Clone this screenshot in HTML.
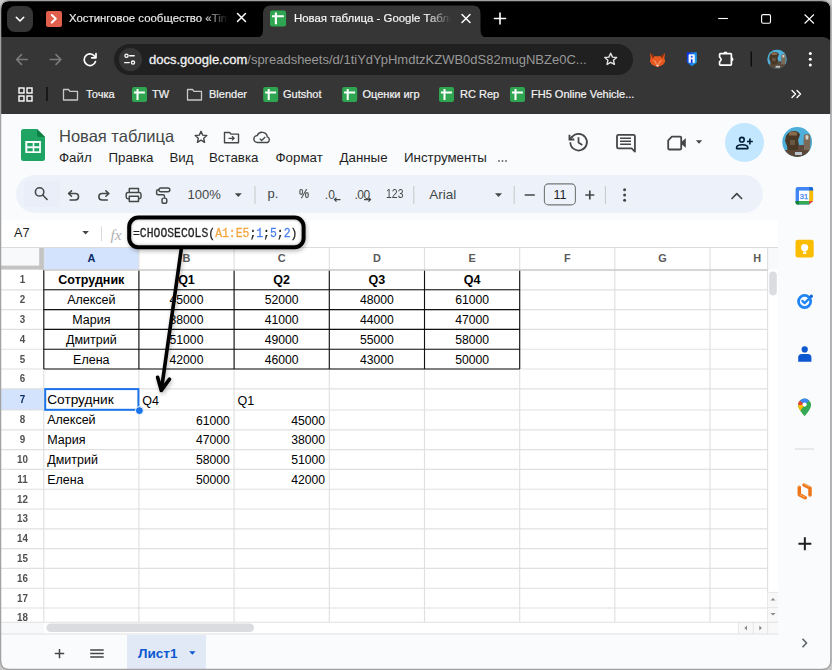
<!DOCTYPE html>
<html><head><meta charset="utf-8">
<style>
*{margin:0;padding:0;box-sizing:border-box}
html,body{width:832px;height:670px;overflow:hidden;background:#d6d6d6;font-family:"Liberation Sans",sans-serif}
.a{position:absolute}
#win{position:absolute;left:0;top:0;width:832px;height:670px;overflow:hidden;background:#000}
.t{position:absolute;white-space:nowrap;line-height:1}
svg{position:absolute;overflow:visible}
</style></head><body>
<div id="win">
<!-- TAB STRIP -->
<div class="a" style="left:7px;top:6px;width:26px;height:26px;border-radius:8px;background:#363636"></div>
<svg style="left:0;top:0" width="832" height="40">
  <path d="M16.3 17.3l3.7 3.7 3.7-3.7" fill="none" stroke="#fff" stroke-width="1.6" stroke-linecap="round" stroke-linejoin="round"/>
</svg>
<!-- tab1 -->
<div class="a" style="left:46px;top:11px;width:15.6px;height:15.6px;border-radius:2px;background:#e0604d"></div>
<svg style="left:0;top:0" width="832" height="40">
  <path d="M51.8 15l4 3.8-4 3.8" fill="none" stroke="#fff" stroke-width="2" stroke-linecap="round" stroke-linejoin="round"/>
</svg>
<div class="t" style="left:69px;top:13.3px;font-size:11.4px;color:#eeeeee;-webkit-text-stroke:0.15px #eeeeee;width:159px;overflow:hidden;-webkit-mask-image:linear-gradient(90deg,#000 85%,transparent)">Хостинговое сообщество «Timeweb»</div>
<svg style="left:0;top:0" width="832" height="40">
  <path d="M237.5 13.5l8 8M245.5 13.5l-8 8" stroke="#fff" stroke-width="1.5" stroke-linecap="round"/>
</svg>
<!-- active tab -->
<svg style="left:0;top:0" width="832" height="40">
  <path d="M255 38 Q263 38 263 30 L263 13.4 Q263 5.4 271 5.4 L472.5 5.4 Q480.5 5.4 480.5 13.4 L480.5 30 Q480.5 38 488.5 38 Z" fill="#363636"/>
</svg>
<div class="t" style="left:294px;top:13.3px;font-size:11.4px;color:#f6f6f6;-webkit-text-stroke:0.2px #f6f6f6;width:157px;overflow:hidden;-webkit-mask-image:linear-gradient(90deg,#000 85%,transparent)">Новая таблица - Google Таблицы</div>
<svg style="left:0;top:0" width="832" height="40">
  <path d="M462 14.5l8 8M470 14.5l-8 8" stroke="#fff" stroke-width="1.5" stroke-linecap="round"/>
  <path d="M500 13v11M494.5 18.5h11" stroke="#fff" stroke-width="1.6" stroke-linecap="round"/>
  <path d="M718.2 18.5h9.7" stroke="#fff" stroke-width="1.1"/>
  <rect x="761.6" y="14.6" width="8.9" height="8.6" rx="1.5" fill="none" stroke="#fff" stroke-width="1.1"/>
  <path d="M804.6 14.5l9.3 9M813.9 14.5l-9.3 9" stroke="#fff" stroke-width="1.1"/>
</svg>

<!-- TOOLBAR + BOOKMARKS -->
<div class="a" style="left:0;top:37px;width:832px;height:77px;background:#363636;border-radius:0 9px 0 0"></div>
<svg style="left:0;top:0" width="832" height="120">
  <!-- back -->
  <path d="M27.3 59.5H16.6M21.5 54.6l-4.9 4.9 4.9 4.9" fill="none" stroke="#7b7b7b" stroke-width="1.6" stroke-linecap="round" stroke-linejoin="round"/>
  <path d="M50.2 59.5H60.9M56 54.6l4.9 4.9-4.9 4.9" fill="none" stroke="#7b7b7b" stroke-width="1.6" stroke-linecap="round" stroke-linejoin="round"/>
  <path d="M95.2 57.2A5.8 5.8 0 1 0 95.5 61.5" fill="none" stroke="#fff" stroke-width="1.7" stroke-linecap="round"/>
  <path d="M96 53.5v4.3h-4.3" fill="none" stroke="#fff" stroke-width="1.7" stroke-linecap="round" stroke-linejoin="round"/>
</svg>
<div class="a" style="left:114px;top:43.5px;width:519px;height:31.5px;border-radius:16px;background:#202020"></div>
<div class="a" style="left:118.5px;top:47.5px;width:23px;height:23px;border-radius:50%;background:#363636"></div>
<svg style="left:0;top:0" width="832" height="120">
  <circle cx="126.5" cy="55.8" r="1.6" fill="none" stroke="#fff" stroke-width="1.3"/>
  <path d="M129.6 55.8h4.6M124.6 62.6h4.6" stroke="#fff" stroke-width="1.4" stroke-linecap="round"/>
  <circle cx="133" cy="62.6" r="1.6" fill="none" stroke="#fff" stroke-width="1.3"/>
  <path d="M610.7 53.2l1.8 3.9 4.1.4-3.1 2.8.9 4.1-3.7-2.1-3.7 2.1.9-4.1-3.1-2.8 4.1-.4z" fill="none" stroke="#e3e3e3" stroke-width="1.4" stroke-linejoin="round"/>
</svg>
<div class="t" style="left:149px;top:53px;font-size:13px;color:#f2f2f2"><span style="-webkit-text-stroke:0.3px #f2f2f2">docs.google.com</span><span style="color:#989898">/spreadsheets/d/1tiYdYpHmdtzKZWB0dS82mugNBZe0C...</span></div>
<!-- extensions -->
<svg style="left:0;top:0" width="832" height="120">
  <path d="M650 53l4.2 3.3h6.6L665 53l-0.6 5.2 0.8 3.2-2.2 3.4-2.8 1.3-2.7 1.2-2.7-1.2-2.8-1.3-2.2-3.4 0.8-3.2z" fill="#e9581f"/>
  <path d="M650 53l4.2 3.3-1.2 2.5zM665 53l-4.2 3.3 1.2 2.5z" fill="#8a2b0c"/>
  <path d="M653.5 60.5l2 1.2 0.8 2.5M661.5 60.5l-2 1.2-0.8 2.5" fill="none" stroke="#f9b28a" stroke-width="0.9"/>
  <path d="M655.7 64.8l1.8 1.9 1.8-1.9z" fill="#e8e0dc"/>
  <defs><linearGradient id="shg" x1="0" y1="0" x2="1" y2="0.4"><stop offset="0" stop-color="#0a24e6"/><stop offset="1" stop-color="#1aa6f3"/></linearGradient></defs>
  <path d="M686.8 52.3H696.8V62.4L691.8 66.2L686.8 62.4Z" fill="url(#shg)"/>
  <path d="M688.6 62.8V55.4Q688.6 54.3 689.7 54.3H693.7Q694.8 54.3 694.8 55.4V62.8Z" fill="#eef4ff"/>
  <circle cx="691.7" cy="56.7" r="1" fill="#1d56e8"/>
  <rect x="690.9" y="59.3" width="1.6" height="3.6" fill="#0c2ae0"/>
  <path d="M720.4 53.7H730.6Q731.4 53.7 731.4 54.5V64.3Q731.4 65.1 730.6 65.1H720.4Q719.6 65.1 719.6 64.3V61.6Q722.6 59.4 719.6 57.1V54.5Q719.6 53.7 720.4 53.7Z" fill="none" stroke="#fff" stroke-width="1.7" stroke-linejoin="round"/>
  <path d="M723.4 53.7A2.1 2.1 0 0 1 727.6 53.7Z M731.4 57.2A2.1 2.1 0 0 1 731.4 61.4Z" fill="#fff"/>
  <path d="M751.2 51.5v15" stroke="#0c0c0c" stroke-width="1.4"/>
  <circle cx="810.3" cy="53.5" r="1.5" fill="#fff"/><circle cx="810.3" cy="59.3" r="1.5" fill="#fff"/><circle cx="810.3" cy="65.1" r="1.5" fill="#fff"/>
</svg>
<svg style="left:0;top:0" width="832" height="120"><g transform="translate(255.342 -33.719) scale(0.6544)"><g clip-path="url(#avc)">
  <rect x="782" y="127" width="31" height="31" fill="#4eb0da"/>
  <g filter="url(#avb)">
  <path d="M786 136q3-5 8-5q5 0 6 4l-2 5 1 5-2 10h-9l-1-9-2-5z" fill="#4a3828"/>
  <path d="M789 132.5q4-2 8 0l0 3h-8z" fill="#8a6a4c"/>
  <path d="M790 140h5v5h-5z" fill="#6b5644"/>
  <path d="M804 135q3-2 6 0l0.5 7-1 11h-5l-1-11z" fill="#7c6a58"/>
  <path d="M805.5 135.5q1.5-1 3 0.5l-0.3 3.5h-2.5z" fill="#d9d3c9"/>
  <rect x="782" y="150" width="31" height="8" fill="#5a4634"/>
  <rect x="795" y="152" width="7" height="3" fill="#b9c4cc"/>
  <path d="M798 145h6v6h-6z" fill="#5b4a3a"/>
  </g>
 </g></g></svg>
<!-- bookmarks -->
<svg style="left:0;top:0" width="832" height="120">
  <g fill="none" stroke="#fff" stroke-width="1.4">
   <rect x="19" y="88" width="5" height="5"/><rect x="27" y="88" width="5" height="5"/>
   <rect x="19" y="96" width="5" height="5"/><rect x="27" y="96" width="5" height="5"/>
  </g>
  <path d="M47 87v14" stroke="#0c0c0c" stroke-width="1.4"/>
  <g fill="none" stroke="#c8c8c8" stroke-width="1.3" stroke-linejoin="round">
   <path d="M63.5 89.5h5l1.5 1.8h7.5v8.7h-14z"/>
   <path d="M187.5 89.5h5l1.5 1.8h7.5v8.7h-14z"/>
  </g>
</svg>
<svg style="left:0;top:0" width="832" height="120">
  <defs><g id="shf"><rect x="0" y="0" width="15" height="15" rx="2" fill="#2fa551"/><path d="M1.9 5.4h11M5.5 1.9v11" stroke="#fff" stroke-width="2"/></g></defs>
  <use href="#shf" x="132" y="87"/>
  <use href="#shf" x="263.2" y="87"/>
  <use href="#shf" x="342.2" y="87"/>
  <use href="#shf" x="439" y="87"/>
  <use href="#shf" x="510" y="87"/>
  <g transform="translate(270 10.5) scale(1.07)"><use href="#shf"/></g>
</svg>
<div class="t" style="left:86px;top:88.9px;font-size:11px;color:#f4f4f4;-webkit-text-stroke:0.2px #f4f4f4">Точка</div>
<div class="t" style="left:152px;top:88.9px;font-size:11px;color:#f4f4f4;-webkit-text-stroke:0.2px #f4f4f4">TW</div>
<div class="t" style="left:209px;top:88.9px;font-size:11px;color:#f4f4f4;-webkit-text-stroke:0.2px #f4f4f4">Blender</div>
<div class="t" style="left:283px;top:88.9px;font-size:11px;color:#f4f4f4;-webkit-text-stroke:0.2px #f4f4f4">Gutshot</div>
<div class="t" style="left:362.5px;top:88.9px;font-size:11px;color:#f4f4f4;-webkit-text-stroke:0.2px #f4f4f4">Оценки игр</div>
<div class="t" style="left:460px;top:88.9px;font-size:11px;color:#f4f4f4;-webkit-text-stroke:0.2px #f4f4f4">RC Rep</div>
<div class="t" style="left:531px;top:88.9px;font-size:11px;color:#f4f4f4;-webkit-text-stroke:0.2px #f4f4f4">FH5 Online Vehicle...</div>
<svg style="left:0;top:0" width="832" height="120">
  <path d="M792 90.5l3.5 3.5-3.5 3.5M797 90.5l3.5 3.5-3.5 3.5" fill="none" stroke="#fff" stroke-width="1.4" stroke-linecap="round" stroke-linejoin="round"/>
</svg>

<!-- SHEETS PAGE -->
<div class="a" style="left:0;top:113.5px;width:832px;height:557px;background:#f9fbfd"></div>
<svg style="left:0;top:0" width="832" height="670">
  <path d="M23.5 129H37L45 137V158.5Q45 161 42.5 161H23.5Q21 161 21 158.5V131.5Q21 129 23.5 129Z" fill="#1fa463"/>
  <path d="M37 129L45 137H39Q37 137 37 135Z" fill="#0e8043"/>
  <rect x="25.3" y="141" width="15.6" height="12" fill="#fff"/>
  <rect x="27.3" y="143" width="5.4" height="3.3" fill="#1fa463"/><rect x="34.3" y="143" width="4.9" height="3.3" fill="#1fa463"/>
  <rect x="27.3" y="148.2" width="5.4" height="3.1" fill="#1fa463"/><rect x="34.3" y="148.2" width="4.9" height="3.1" fill="#1fa463"/>
</svg>
<div class="t" style="left:59px;top:127.9px;font-size:16.5px;color:#444746">Новая таблица</div>
<svg style="left:0;top:0" width="832" height="670">
  <path d="M201 131.3l1.7 3.8 4.1.4-3.1 2.8.9 4-3.6-2.1-3.6 2.1.9-4-3.1-2.8 4.1-.4z" fill="none" stroke="#444746" stroke-width="1.4" stroke-linejoin="round"/>
  <path d="M224.5 132.5h5l1.5 1.6h7.5v8.6h-14z" fill="none" stroke="#444746" stroke-width="1.4" stroke-linejoin="round"/>
  <path d="M228.5 138.3h5.5M232 136.2l2.1 2.1-2.1 2.1" fill="none" stroke="#444746" stroke-width="1.3"/>
  <path d="M257.5 142.5a3.5 3.5 0 0 1-0.3-7a5.3 5.3 0 0 1 10.1 1.4a3 3 0 0 1 0.2 5.6z" fill="none" stroke="#444746" stroke-width="1.4" stroke-linejoin="round"/>
  <path d="M259.7 138.6l2 1.9 3.5-3.5" fill="none" stroke="#444746" stroke-width="1.3"/>
</svg>
<div class="t" style="left:59px;top:151.3px;font-size:13.3px;color:#1f1f1f">Файл</div>
<div class="t" style="left:108.5px;top:151.3px;font-size:13.3px;color:#1f1f1f">Правка</div>
<div class="t" style="left:169.5px;top:151.3px;font-size:13.3px;color:#1f1f1f">Вид</div>
<div class="t" style="left:209px;top:151.3px;font-size:13.3px;color:#1f1f1f">Вставка</div>
<div class="t" style="left:275.5px;top:151.3px;font-size:13.3px;color:#1f1f1f">Формат</div>
<div class="t" style="left:339.5px;top:151.3px;font-size:13.3px;color:#1f1f1f">Данные</div>
<div class="t" style="left:404px;top:151.3px;font-size:13.3px;color:#1f1f1f">Инструменты</div>
<svg style="left:0;top:0" width="832" height="670">
  <g fill="#5f6368"><circle cx="499" cy="161" r="0.9"/><circle cx="502.5" cy="161" r="0.9"/><circle cx="506" cy="161" r="0.9"/></g>
  <!-- history -->
  <g fill="none" stroke="#444746" stroke-width="1.75">
    <path d="M570.3 142.2A8.3 8.3 0 1 0 571.8 137.4"/>
    <path d="M578.5 137.3V142.6L582.3 145"/>
    <path d="M569.6 139.4L572.6 136.4"/>
  </g>
  <path d="M569.5 134.8V139.5H574.3" fill="none" stroke="#444746" stroke-width="1.9"/>
  <!-- comment -->
  <path d="M618.4 134.9H633.5Q634.9 134.9 634.9 136.3V151.6L631.6 148.4H618.4Q617 148.4 617 147V136.3Q617 134.9 618.4 134.9Z" fill="none" stroke="#444746" stroke-width="1.8" stroke-linejoin="round"/>
  <path d="M620.1 138.2H631M620.1 141.3H631M620.1 144.3H631" stroke="#444746" stroke-width="1.4"/>
  <!-- video -->
  <path d="M668.2 140.4L671.9 136.7H680.3Q681.2 136.7 681.2 137.6V148.6Q681.2 149.5 680.3 149.5H669.1Q668.2 149.5 668.2 148.6Z" fill="none" stroke="#444746" stroke-width="1.8" stroke-linejoin="round"/>
  <path d="M681.5 141.8L685.8 138.2V147.7L681.5 144.3Z" fill="#444746"/>
  <path d="M695.9 140.3H702.2L699.05 143.8Z" fill="#444746"/>
</svg>
<div class="a" style="left:724.5px;top:123px;width:39px;height:39px;border-radius:50%;background:#c2e7ff"></div>
<svg style="left:0;top:0" width="832" height="670">
  <circle cx="741.9" cy="139.7" r="2.3" fill="none" stroke="#001d35" stroke-width="1.6"/>
  <path d="M736.6 148.6V147.6Q736.6 144.8 742.2 144.8Q747.8 144.8 747.8 147.6V148.6Z" fill="none" stroke="#001d35" stroke-width="1.6" stroke-linejoin="round"/>
  <path d="M747 141.5H752.8M749.9 138.6V144.4" stroke="#001d35" stroke-width="1.6"/>
</svg>
<svg style="left:0;top:0" width="832" height="670">
 <defs><clipPath id="avc"><circle cx="797.2" cy="142" r="14.9"/></clipPath><filter id="avb"><feGaussianBlur stdDeviation="0.7"/></filter></defs>
 <g clip-path="url(#avc)">
  <rect x="782" y="127" width="31" height="31" fill="#4eb0da"/>
  <g filter="url(#avb)">
  <path d="M786 136q3-5 8-5q5 0 6 4l-2 5 1 5-2 10h-9l-1-9-2-5z" fill="#4a3828"/>
  <path d="M789 132.5q4-2 8 0l0 3h-8z" fill="#8a6a4c"/>
  <path d="M790 140h5v5h-5z" fill="#6b5644"/>
  <path d="M804 135q3-2 6 0l0.5 7-1 11h-5l-1-11z" fill="#7c6a58"/>
  <path d="M805.5 135.5q1.5-1 3 0.5l-0.3 3.5h-2.5z" fill="#d9d3c9"/>
  <rect x="782" y="150" width="31" height="8" fill="#5a4634"/>
  <rect x="795" y="152" width="7" height="3" fill="#b9c4cc"/>
  <path d="M798 145h6v6h-6z" fill="#5b4a3a"/>
  </g>
 </g>
</svg>

<!-- TOOLBAR PILL -->
<div class="a" style="left:16px;top:175px;width:747px;height:38px;border-radius:19px;background:#edf2fa"></div>
<div class="a" style="left:24px;top:180.5px;width:36px;height:26.5px;background:#e9eef9"></div>
<svg style="left:0;top:0" width="832" height="670">
 <g fill="none" stroke="#444746" stroke-width="1.55" stroke-linecap="round" stroke-linejoin="round">
  <circle cx="39.6" cy="191.9" r="4.2"/><path d="M42.7 195l4.4 4.5"/>
  <path d="M71.5 190.8L68.5 193.5L71.5 196.3M68.8 193.5H75.3A3.25 3.25 0 0 1 75.3 200H70.1"/>
  <path d="M105.9 190.8L108.9 193.5L105.9 196.3M108.6 193.5H102.1A3.25 3.25 0 0 0 102.1 200H107.3"/>
  <path d="M129.3 192.2V188.5H138.5V192.2M129.3 198.8H127.9Q126.2 198.8 126.2 197.1V194.2Q126.2 192.4 128 192.4H139.3Q141 192.4 141 194.2V197.1Q141 198.8 139.3 198.8H138.5M129.3 196.3H138.5V201.4H129.3Z" stroke-width="1.45"/>
  <path d="M160.9 187.9H167.9A1.95 1.95 0 0 1 167.9 191.8H160.9A1.95 1.95 0 0 1 160.9 187.9ZM158.9 189.8H158.1Q156.6 189.8 156.6 191.3V193.2Q156.6 194.7 158.1 194.7H163Q164.5 194.7 164.5 196.2V198M163.8 198.1H164.8Q166.8 198.1 166.8 200.1V201.4Q166.8 203.3 164.8 203.3H163.8Q162 203.3 162 201.4V200.1Q162 198.1 163.8 198.1Z" stroke-width="1.45"/>
 </g>
 <path d="M234.8 193.3h7l-3.5 3.7z" fill="#444746"/>
 <path d="M255 186v18M413.8 186v18M514.2 186v18M605.4 186v18" stroke="#c7c7c7" stroke-width="1"/>
 <path d="M495 193.3h7l-3.5 3.7z" fill="#444746"/>
 <path d="M524.7 195h10.1M585.3 195h9M589.8 190.5v9" stroke="#444746" stroke-width="1.7"/>
 <rect x="544.4" y="183.9" width="31" height="21" rx="4" fill="none" stroke="#747775" stroke-width="1.1"/>
 <g fill="#444746"><circle cx="624.6" cy="189.7" r="1.5"/><circle cx="624.6" cy="195" r="1.5"/><circle cx="624.6" cy="200.3" r="1.5"/></g>
 <path d="M732 198.5l4.8-4.8 4.8 4.8" fill="none" stroke="#444746" stroke-width="1.7" stroke-linecap="round" stroke-linejoin="round"/>
 <path d="M334.5 199.6h6M336.5 197.6l-2 2 2 2M364 199.6h6.5M368.5 197.6l2 2-2 2" fill="none" stroke="#444746" stroke-width="1.3"/>
</svg>
<div class="t" style="left:187.5px;top:188.3px;font-size:13px;color:#444746">100%</div>
<div class="t" style="left:267.5px;top:187px;font-size:13px;color:#444746">р.</div>
<div class="t" style="left:298.6px;top:188.3px;font-size:12.6px;color:#444746;-webkit-text-stroke:0.25px #444746;transform:scaleX(0.9);transform-origin:0 0">%</div>
<div class="t" style="left:324.8px;top:188.6px;font-size:12px;color:#444746">.0</div>
<div class="t" style="left:354.5px;top:188.6px;font-size:12px;color:#444746;letter-spacing:-0.5px">.00</div>
<div class="t" style="left:386px;top:188.3px;font-size:12.6px;color:#444746;transform:scaleX(0.83);transform-origin:0 0">123</div>
<div class="t" style="left:429.3px;top:187.8px;font-size:13.5px;color:#444746">Arial</div>
<div class="t" style="left:552px;top:189px;font-size:12.5px;color:#1f1f1f;width:16px;text-align:center">11</div>

<!-- FORMULA BAR -->
<div class="a" style="left:1px;top:219.8px;width:777px;height:28px;background:#fff"></div>
<div class="t" style="left:14px;top:226.8px;font-size:12.7px;color:#1f1f1f">A7</div>
<svg style="left:0;top:0" width="832" height="670">
 <path d="M82.3 231h6.6l-3.3 3.5z" fill="#444746"/>
 <path d="M101.5 226.3v15" stroke="#d9d9d9" stroke-width="1"/>
</svg>
<div class="t" style="left:110.5px;top:227px;font-size:15.5px;color:#b0b0b0;font-family:'Liberation Serif',serif;font-style:italic">fx</div>
<!-- GRID -->
<div class="a" style="left:1px;top:247.5px;width:777px;height:387px;background:#fff"></div>
<svg style="left:0;top:0" width="832" height="670">
<rect x="1" y="248" width="38.4" height="17.6" fill="#f8f9fa"/>
<rect x="43.8" y="248" width="95.1" height="21.5" fill="#d3e3fd"/>
<rect x="1" y="388.8" width="42.8" height="21.2" fill="#d3e3fd"/>
<rect x="767.6" y="248" width="10.5" height="21.5" fill="#f8f9fa"/>
<path d="M1 289.8H767.6" stroke="#e0e0e0" stroke-width="1.15"/>
<path d="M1 309.6H767.6" stroke="#e0e0e0" stroke-width="1.15"/>
<path d="M1 329.4H767.6" stroke="#e0e0e0" stroke-width="1.15"/>
<path d="M1 349.2H767.6" stroke="#e0e0e0" stroke-width="1.15"/>
<path d="M1 369H767.6" stroke="#e0e0e0" stroke-width="1.15"/>
<path d="M1 388.8H767.6" stroke="#e0e0e0" stroke-width="1.15"/>
<path d="M1 410H767.6" stroke="#e0e0e0" stroke-width="1.15"/>
<path d="M1 429.8H767.6" stroke="#e0e0e0" stroke-width="1.15"/>
<path d="M1 449.6H767.6" stroke="#e0e0e0" stroke-width="1.15"/>
<path d="M1 469.4H767.6" stroke="#e0e0e0" stroke-width="1.15"/>
<path d="M1 489.2H767.6" stroke="#e0e0e0" stroke-width="1.15"/>
<path d="M1 509H767.6" stroke="#e0e0e0" stroke-width="1.15"/>
<path d="M1 528.8H767.6" stroke="#e0e0e0" stroke-width="1.15"/>
<path d="M1 548.6H767.6" stroke="#e0e0e0" stroke-width="1.15"/>
<path d="M1 568.4H767.6" stroke="#e0e0e0" stroke-width="1.15"/>
<path d="M1 588.2H767.6" stroke="#e0e0e0" stroke-width="1.15"/>
<path d="M1 608H767.6" stroke="#e0e0e0" stroke-width="1.15"/>
<path d="M43.8 248V622.2" stroke="#e0e0e0" stroke-width="1.15"/>
<path d="M138.9 248V622.2" stroke="#e0e0e0" stroke-width="1.15"/>
<path d="M234.1 248V622.2" stroke="#e0e0e0" stroke-width="1.15"/>
<path d="M329.3 248V622.2" stroke="#e0e0e0" stroke-width="1.15"/>
<path d="M424.5 248V622.2" stroke="#e0e0e0" stroke-width="1.15"/>
<path d="M519.7 248V622.2" stroke="#e0e0e0" stroke-width="1.15"/>
<path d="M614.8 248V622.2" stroke="#e0e0e0" stroke-width="1.15"/>
<path d="M710.0 248V622.2" stroke="#e0e0e0" stroke-width="1.15"/>
<path d="M767.6 248V622.2" stroke="#e0e0e0" stroke-width="1.15"/>
<path d="M1 247.5H778" stroke="#dadce0" stroke-width="1"/>

<rect x="39.2" y="248" width="4.6" height="21.5" fill="#c4c4c4"/>
<rect x="1" y="265.6" width="42.8" height="4" fill="#c4c4c4"/>
<path d="M43.8 270V369" stroke="#111" stroke-width="1.1"/>
<path d="M138.9 270V369" stroke="#111" stroke-width="1.1"/>
<path d="M234.1 270V369" stroke="#111" stroke-width="1.1"/>
<path d="M329.3 270V369" stroke="#111" stroke-width="1.1"/>
<path d="M424.5 270V369" stroke="#111" stroke-width="1.1"/>
<path d="M519.7 270V369" stroke="#111" stroke-width="1.1"/>

<path d="M43.8 289.8H519.7" stroke="#111" stroke-width="1.1"/>
<path d="M43.8 309.6H519.7" stroke="#111" stroke-width="1.1"/>
<path d="M43.8 329.4H519.7" stroke="#111" stroke-width="1.1"/>
<path d="M43.8 349.2H519.7" stroke="#111" stroke-width="1.1"/>
<path d="M43.8 369H519.7" stroke="#111" stroke-width="1.1"/>
<path d="M43.8 270H767.6" stroke="#c9c9c9" stroke-width="1.5"/>
<rect x="769.2" y="271.4" width="7.6" height="24" rx="3.8" fill="#dadce0"/>
<rect x="767.6" y="592.4" width="10.5" height="29.8" fill="#f8f8f8"/>
<path d="M767.6 592.4H778M767.6 607.6H778" stroke="#e6e6e6" stroke-width="1"/>
<path d="M770.5 600.5h5l-2.5-2.6z M770.5 613h5l-2.5 2.6z" fill="#8a8a8a"/>
<rect x="1" y="622.2" width="777" height="12" fill="#fff"/>
<rect x="1" y="622.2" width="42.8" height="12" fill="#f8f9fa"/>
<rect x="738.4" y="622.2" width="39.7" height="12" fill="#f8f8f8"/>
<path d="M738.4 622.2V634M753.2 622.2V634M767.6 622.2V634" stroke="#e6e6e6" stroke-width="1"/>
<path d="M747 625.5v5l-2.6-2.5z M759.3 625.5v5l2.6-2.5z" fill="#8a8a8a"/>
<path d="M1 622.2H778" stroke="#e0e0e0" stroke-width="1.15"/>
<path d="M1 634H778" stroke="#e0e0e0" stroke-width="1.15"/>
<rect x="46.4" y="623.6" width="207.6" height="8.4" rx="4.2" fill="#dadce0"/>
</svg>
<div class="t" style="left:43.8px;width:95.10000000000001px;text-align:center;top:253.3px;font-size:10.9px;color:#0a2a66;font-weight:bold;">A</div>
<div class="t" style="left:138.9px;width:95.19999999999999px;text-align:center;top:253.3px;font-size:10.9px;color:#5a5a5a;font-weight:bold;">B</div>
<div class="t" style="left:234.1px;width:95.20000000000002px;text-align:center;top:253.3px;font-size:10.9px;color:#5a5a5a;font-weight:bold;">C</div>
<div class="t" style="left:329.3px;width:95.19999999999999px;text-align:center;top:253.3px;font-size:10.9px;color:#5a5a5a;font-weight:bold;">D</div>
<div class="t" style="left:424.5px;width:95.20000000000005px;text-align:center;top:253.3px;font-size:10.9px;color:#5a5a5a;font-weight:bold;">E</div>
<div class="t" style="left:519.7px;width:95.09999999999991px;text-align:center;top:253.3px;font-size:10.9px;color:#5a5a5a;font-weight:bold;">F</div>
<div class="t" style="left:614.8px;width:95.20000000000005px;text-align:center;top:253.3px;font-size:10.9px;color:#5a5a5a;font-weight:bold;">G</div>
<div class="t" style="left:710.0px;width:51px;text-align:right;top:253.3px;font-size:10.9px;color:#5a5a5a;font-weight:bold;">H</div>
<div class="t" style="left:1px;width:42.8px;text-align:center;top:274.4px;font-size:10.9px;color:#505050;font-weight:bold;transform:scaleX(0.9)">1</div>
<div class="t" style="left:1px;width:42.8px;text-align:center;top:294.2px;font-size:10.9px;color:#505050;font-weight:bold;transform:scaleX(0.9)">2</div>
<div class="t" style="left:1px;width:42.8px;text-align:center;top:314.0px;font-size:10.9px;color:#505050;font-weight:bold;transform:scaleX(0.9)">3</div>
<div class="t" style="left:1px;width:42.8px;text-align:center;top:333.8px;font-size:10.9px;color:#505050;font-weight:bold;transform:scaleX(0.9)">4</div>
<div class="t" style="left:1px;width:42.8px;text-align:center;top:353.6px;font-size:10.9px;color:#505050;font-weight:bold;transform:scaleX(0.9)">5</div>
<div class="t" style="left:1px;width:42.8px;text-align:center;top:373.4px;font-size:10.9px;color:#505050;font-weight:bold;transform:scaleX(0.9)">6</div>
<div class="t" style="left:1px;width:42.8px;text-align:center;top:393.9px;font-size:10.9px;color:#0a2a66;font-weight:bold;transform:scaleX(0.9)">7</div>
<div class="t" style="left:1px;width:42.8px;text-align:center;top:414.4px;font-size:10.9px;color:#505050;font-weight:bold;transform:scaleX(0.9)">8</div>
<div class="t" style="left:1px;width:42.8px;text-align:center;top:434.2px;font-size:10.9px;color:#505050;font-weight:bold;transform:scaleX(0.9)">9</div>
<div class="t" style="left:1px;width:42.8px;text-align:center;top:454.0px;font-size:10.9px;color:#505050;font-weight:bold;transform:scaleX(0.9)">10</div>
<div class="t" style="left:1px;width:42.8px;text-align:center;top:473.8px;font-size:10.9px;color:#505050;font-weight:bold;transform:scaleX(0.9)">11</div>
<div class="t" style="left:1px;width:42.8px;text-align:center;top:493.6px;font-size:10.9px;color:#505050;font-weight:bold;transform:scaleX(0.9)">12</div>
<div class="t" style="left:1px;width:42.8px;text-align:center;top:513.4px;font-size:10.9px;color:#505050;font-weight:bold;transform:scaleX(0.9)">13</div>
<div class="t" style="left:1px;width:42.8px;text-align:center;top:533.2px;font-size:10.9px;color:#505050;font-weight:bold;transform:scaleX(0.9)">14</div>
<div class="t" style="left:1px;width:42.8px;text-align:center;top:553.0px;font-size:10.9px;color:#505050;font-weight:bold;transform:scaleX(0.9)">15</div>
<div class="t" style="left:1px;width:42.8px;text-align:center;top:572.8px;font-size:10.9px;color:#505050;font-weight:bold;transform:scaleX(0.9)">16</div>
<div class="t" style="left:1px;width:42.8px;text-align:center;top:592.6px;font-size:10.9px;color:#505050;font-weight:bold;transform:scaleX(0.9)">17</div>
<div class="t" style="left:1px;width:42.8px;text-align:center;top:612.4px;font-size:10.9px;color:#505050;font-weight:bold;transform:scaleX(0.9)">18</div>
<!-- CELLS -->
<div class="t" style="left:43.8px;width:95.1px;text-align:center;top:274.32px;font-size:12.5px;color:#000;font-weight:bold;">Сотрудник</div>
<div class="t" style="left:138.9px;width:95.2px;text-align:center;top:274.32px;font-size:12.5px;color:#000;font-weight:bold;">Q1</div>
<div class="t" style="left:234.1px;width:95.2px;text-align:center;top:274.32px;font-size:12.5px;color:#000;font-weight:bold;">Q2</div>
<div class="t" style="left:329.3px;width:95.2px;text-align:center;top:274.32px;font-size:12.5px;color:#000;font-weight:bold;">Q3</div>
<div class="t" style="left:424.5px;width:95.2px;text-align:center;top:274.32px;font-size:12.5px;color:#000;font-weight:bold;">Q4</div>
<div class="t" style="left:43.8px;width:95.1px;text-align:center;top:294.12px;font-size:12.5px;color:#000;">Алексей</div>
<div class="t" style="left:138.9px;width:95.2px;text-align:center;top:294.37px;font-size:12.2px;color:#000;">45000</div>
<div class="t" style="left:234.1px;width:95.2px;text-align:center;top:294.37px;font-size:12.2px;color:#000;">52000</div>
<div class="t" style="left:329.3px;width:95.2px;text-align:center;top:294.37px;font-size:12.2px;color:#000;">48000</div>
<div class="t" style="left:424.5px;width:95.2px;text-align:center;top:294.37px;font-size:12.2px;color:#000;">61000</div>
<div class="t" style="left:43.8px;width:95.1px;text-align:center;top:313.92px;font-size:12.5px;color:#000;">Мария</div>
<div class="t" style="left:138.9px;width:95.2px;text-align:center;top:314.17px;font-size:12.2px;color:#000;">38000</div>
<div class="t" style="left:234.1px;width:95.2px;text-align:center;top:314.17px;font-size:12.2px;color:#000;">41000</div>
<div class="t" style="left:329.3px;width:95.2px;text-align:center;top:314.17px;font-size:12.2px;color:#000;">44000</div>
<div class="t" style="left:424.5px;width:95.2px;text-align:center;top:314.17px;font-size:12.2px;color:#000;">47000</div>
<div class="t" style="left:43.8px;width:95.1px;text-align:center;top:333.72px;font-size:12.5px;color:#000;">Дмитрий</div>
<div class="t" style="left:138.9px;width:95.2px;text-align:center;top:333.97px;font-size:12.2px;color:#000;">51000</div>
<div class="t" style="left:234.1px;width:95.2px;text-align:center;top:333.97px;font-size:12.2px;color:#000;">49000</div>
<div class="t" style="left:329.3px;width:95.2px;text-align:center;top:333.97px;font-size:12.2px;color:#000;">55000</div>
<div class="t" style="left:424.5px;width:95.2px;text-align:center;top:333.97px;font-size:12.2px;color:#000;">58000</div>
<div class="t" style="left:43.8px;width:95.1px;text-align:center;top:353.52px;font-size:12.5px;color:#000;">Елена</div>
<div class="t" style="left:138.9px;width:95.2px;text-align:center;top:353.77px;font-size:12.2px;color:#000;">42000</div>
<div class="t" style="left:234.1px;width:95.2px;text-align:center;top:353.77px;font-size:12.2px;color:#000;">46000</div>
<div class="t" style="left:329.3px;width:95.2px;text-align:center;top:353.77px;font-size:12.2px;color:#000;">43000</div>
<div class="t" style="left:424.5px;width:95.2px;text-align:center;top:353.77px;font-size:12.2px;color:#000;">50000</div>
<div class="t" style="left:47.2px;top:393.10px;font-size:13.7px;color:#000;">Сотрудник</div>
<div class="t" style="left:142.3px;top:394.52px;font-size:12.5px;color:#000;">Q4</div>
<div class="t" style="left:237.5px;top:394.52px;font-size:12.5px;color:#000;">Q1</div>
<div class="t" style="left:47.2px;top:414.32px;font-size:12.5px;color:#000;">Алексей</div>
<div class="t" style="left:138.9px;width:91.0px;text-align:right;top:414.57px;font-size:12.2px;color:#000;">61000</div>
<div class="t" style="left:234.1px;width:91.0px;text-align:right;top:414.57px;font-size:12.2px;color:#000;">45000</div>
<div class="t" style="left:47.2px;top:434.12px;font-size:12.5px;color:#000;">Мария</div>
<div class="t" style="left:138.9px;width:91.0px;text-align:right;top:434.37px;font-size:12.2px;color:#000;">47000</div>
<div class="t" style="left:234.1px;width:91.0px;text-align:right;top:434.37px;font-size:12.2px;color:#000;">38000</div>
<div class="t" style="left:47.2px;top:453.92px;font-size:12.5px;color:#000;">Дмитрий</div>
<div class="t" style="left:138.9px;width:91.0px;text-align:right;top:454.17px;font-size:12.2px;color:#000;">58000</div>
<div class="t" style="left:234.1px;width:91.0px;text-align:right;top:454.17px;font-size:12.2px;color:#000;">51000</div>
<div class="t" style="left:47.2px;top:473.72px;font-size:12.5px;color:#000;">Елена</div>
<div class="t" style="left:138.9px;width:91.0px;text-align:right;top:473.97px;font-size:12.2px;color:#000;">50000</div>
<div class="t" style="left:234.1px;width:91.0px;text-align:right;top:473.97px;font-size:12.2px;color:#000;">42000</div>
<svg style="left:0;top:0" width="832" height="670">
<rect x="45.2" y="389.1" width="93.2" height="20.7" fill="none" stroke="#1a73e8" stroke-width="2"/>
<circle cx="139.4" cy="410.6" r="4" fill="#1a73e8" stroke="#fff" stroke-width="1"/>
</svg>
<svg style="left:0;top:0" width="832" height="670">
 <defs><filter id="sh" x="-20%" y="-20%" width="140%" height="140%"><feGaussianBlur in="SourceAlpha" stdDeviation="2.2"/><feOffset dx="1" dy="1.5"/><feComponentTransfer><feFuncA type="linear" slope="0.28"/></feComponentTransfer><feMerge><feMergeNode/><feMergeNode in="SourceGraphic"/></feMerge></filter></defs>
 <g filter="url(#sh)">
  <path d="M181.5 247.5L161.3 390.5M157.6 377.3L161.3 390.5L169.5 379.1" fill="none" stroke="#000" stroke-width="3.6" stroke-linecap="round" stroke-linejoin="round"/>
  <rect x="129.2" y="217.6" width="174.4" height="29.6" rx="9" fill="#fff" stroke="#000" stroke-width="4"/>
 </g>
 <clipPath id="bc"><rect x="131.2" y="219.6" width="170.4" height="25.6" rx="7"/></clipPath>
 <filter id="ib"><feGaussianBlur stdDeviation="1.8"/></filter>
 <g clip-path="url(#bc)"><rect x="129.2" y="217.6" width="174.4" height="29.6" rx="9" fill="none" stroke="#000" stroke-opacity="0.35" stroke-width="4" filter="url(#ib)"/></g>
</svg>
<div class="t" style="left:133.2px;top:227.2px;font-size:13.4px;transform:scaleX(0.852);transform-origin:0 0;font-family:'Liberation Mono',monospace;color:#1f1f1f;-webkit-text-stroke:0.3px currentColor">=CHOOSECOLS(<span style="color:#f4a640">A1:E5</span>;<span style="color:#4a7ff0">1</span>;<span style="color:#4a7ff0">5</span>;<span style="color:#4a7ff0">2</span>)</div>
<svg style="left:0;top:0" width="832" height="670">
 <path d="M797.6 187.1H811.1Q813.1 187.1 813.1 189.1V201L809.2 204.6H797.6Q795.6 204.6 795.6 202.6V189.1Q795.6 187.1 797.6 187.1Z" fill="#4285f4"/>
 <path d="M809.3 187.1h1.8q2 0 2 2v1.8h-3.8z" fill="#1967d2"/>
 <rect x="809.2" y="190.6" width="3.9" height="10.6" fill="#fbbc04"/>
 <path d="M795.6 201h13.6v3.6h-11.6q-2 0-2-2z" fill="#34a853"/>
 <path d="M795.6 201h3.4v3.6h-1.4q-2 0-2-2z" fill="#188038"/>
 <path d="M809.2 201h3.9l-3.9 3.6z" fill="#ea4335"/>
 <rect x="799" y="190.6" width="10.2" height="10.4" fill="#fff"/>
 <text x="804.1" y="199" font-family="Liberation Sans" font-size="7.6" fill="#4285f4" text-anchor="middle" stroke="#4285f4" stroke-width="0.25">31</text>
 <rect x="795.5" y="239.7" width="18.2" height="17.8" rx="2.2" fill="#fbbc04"/>
 <circle cx="804.6" cy="247.6" r="3.6" fill="#fff"/>
 <path d="M802.6 249.5h4l-0.6 2h-2.8z" fill="#fff"/>
 <rect x="803" y="252.2" width="3.4" height="1.7" fill="#fff"/>
 <circle cx="804.6" cy="301.5" r="6.1" fill="none" stroke="#1f84f5" stroke-width="2.7"/>
 <path d="M802.3 300.9l2.3 2.2 6.4-6.3" fill="none" stroke="#1f84f5" stroke-width="2.3" stroke-linecap="round" stroke-linejoin="round"/>
 <circle cx="811.3" cy="296.2" r="1.6" fill="#0b66d6"/>
 <circle cx="804.7" cy="349.4" r="3.1" fill="#0b57d0"/>
 <path d="M798.2 361.7v-4.3q0-3.5 3.5-3.5h6.2q3.5 0 3.5 3.5v4.3z" fill="#0b57d0"/>
 <path d="M804.6 398.5a6.45 6.45 0 0 0-6.45 6.45c0 4.5 6.45 11 6.45 11s6.45-6.5 6.45-11a6.45 6.45 0 0 0-6.45-6.45z" fill="#34a853"/>
 <path d="M798.15 404.95a6.45 6.45 0 0 1 1.9-4.55l4.55 4.55z" fill="#ea4335"/>
 <path d="M800.05 400.4a6.45 6.45 0 0 1 9.1 0l-4.55 4.55z" fill="#4285f4"/>
 <path d="M798.15 404.95c0 1.9.9 3.9 2.1 5.8l4.35-5.8z" fill="#fbbc04"/>
 <circle cx="804.6" cy="404.6" r="2.1" fill="#fff"/>
 <path d="M795 449h19" stroke="#dadce0" stroke-width="1.2"/>
 <g stroke="#ee7418" stroke-width="3.5" stroke-linecap="round" stroke-linejoin="round" fill="none">
  <path d="M799.3 487.2V494.6L805.3 497.7"/>
  <path d="M804 485L810 488V495"/>
 </g>
 <g stroke="#ffc27a" stroke-width="1" stroke-linecap="round" fill="none" opacity="0.7">
  <path d="M798.6 486.5l0.8-0.3M800 494.8l4.8 2.4M804.2 484.2l5.2 2.8"/>
 </g>
 <path d="M798.4 543.8h12.9M804.85 537.3v13" stroke="#1f1f1f" stroke-width="2"/>
 <path d="M802.5 638.8l4 4.2-4 4.2" fill="none" stroke="#5f6368" stroke-width="1.6"/>
</svg>
<div class="a" style="left:127.2px;top:634.5px;width:79px;height:34px;background:#e1e9f7"></div>
<svg style="left:0;top:0" width="832" height="670">
 <path d="M59.5 648.9v9.4M54.8 653.6h9.4" stroke="#444746" stroke-width="1.5"/>
 <path d="M90.2 649.9h13.5M90.2 653.5h13.5M90.2 657.1h13.5" stroke="#444746" stroke-width="1.5"/>
 <path d="M189.2 651.3h6.4l-3.2 3.5z" fill="#0b57d0"/>
</svg>
<div class="t" style="left:138px;top:646.5px;font-size:13.5px;font-weight:bold;color:#0b57d0">Лист1</div>
<svg style="left:0;top:0" width="832" height="670">
  <path fill-rule="evenodd" fill="#c9c9c9" d="M0 0H832V670H0Z M9 1 H822 Q830.5 1 830.5 9.5 V660.5 Q830.5 669 822 669 H9 Q1 669 1 660.5 V9.5 Q1 1 9 1Z"/>
  <path fill="none" stroke="#a2a2a2" stroke-width="1.3" d="M9 0.6 H822 Q830.9 0.6 830.9 9.5 V660.5 Q830.9 669.4 822 669.4 H9 Q0.6 669.4 0.6 660.5 V9.5 Q0.6 0.6 9 0.6Z"/>
</svg>
</div>
</body></html>
